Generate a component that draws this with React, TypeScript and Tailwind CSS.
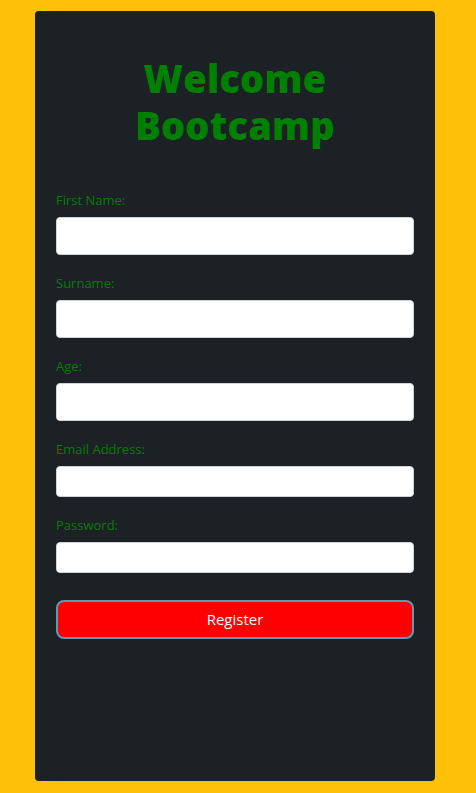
export default function App() {
  const fields: { label: string; type: string; h: string }[] = [
    { label: "First Name:", type: "text", h: "h-[38px]" },
    { label: "Surname:", type: "text", h: "h-[38px]" },
    { label: "Age:", type: "text", h: "h-[38px]" },
    { label: "Email Address:", type: "email", h: "h-[31px]" },
    { label: "Password:", type: "password", h: "h-[31px]" },
  ];
  return (
    <div className="min-h-[793px] w-full bg-[#ffc107] pt-[11px] pb-[12px]" style={{ fontFamily: '"Open Sans", sans-serif' }}>
      <div className="ml-[35px] w-[400px] h-[770px] rounded-[4px] bg-[#1c2125] px-[21px] pt-[44px]">
        <h1 className="text-center text-[38px] leading-[47px] font-extrabold text-[#008000] tracking-[0.2px] mb-[42px]">
          Welcome
          <br />
          Bootcamp
        </h1>
        <form className="flex flex-col" onSubmit={(e) => e.preventDefault()}>
          {fields.map((f) => (
            <div key={f.label} className="flex flex-col mb-[19px]">
              <label className="text-[13px] leading-[18px] text-[#0a7a0a] mb-[8px]">{f.label}</label>
              <input
                type={f.type}
                className={`w-full ${f.h} rounded-[4px] bg-white border border-[#ced4da] px-3 outline-none`}
              />
            </div>
          ))}
          <button
            type="submit"
            className="mt-[8px] h-[39px] w-full rounded-[8px] bg-[#ff0000] border-2 border-[#5b9bb8] text-white text-[15px]"
          >
            Register
          </button>
        </form>
      </div>
    </div>
  );
}
